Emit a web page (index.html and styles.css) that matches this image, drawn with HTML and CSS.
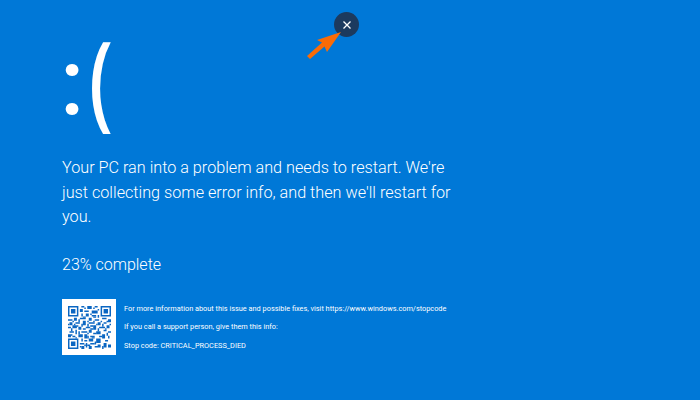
FILE: index.html
```html
<!DOCTYPE html>
<html lang="en">
<head>
<meta charset="utf-8">
<title>Blue screen</title>
<link rel="stylesheet" href="styles.css">
</head>
<body>
<main class="screen">
  <div class="sad"><span class="eyes">:</span><span class="mouth">(</span></div>
  <p class="message">Your PC ran into a problem and needs to restart. We're just collecting some error info, and then we'll restart for you.</p>
  <p class="progress">23% complete</p>
  <div class="details">
    <div class="qr">
      <svg width="43" height="43" viewBox="0 0 29 29">
        <path class="qr-dark" d="M0 0h7v7H0zM22 0h7v7h-7zM0 22h7v7H0z"/>
        <path fill="#fff" d="M1 1h5v5H1zM23 1h5v5h-5zM1 23h5v5H1z"/>
        <path class="qr-dark" d="M2 2h3v3H2zM24 2h3v3h-3zM2 24h3v3H2z"/>
        <path class="qr-dark" d="M9 0h2v1H9zM13 0h3v2h-3zM18 0h2v1h-2zM8 2h2v2H8zM11 3h3v1h-3zM16 3h4v2h-4zM9 5h1v2H9zM12 5h2v2h-2zM16 6h3v1h-3zM20 6h1v2h-1zM0 9h3v1H0zM4 8h2v2H4zM8 8h4v1H8zM14 8h2v2h-2zM18 9h3v1h-3zM23 8h3v1h-3zM27 9h2v2h-2zM1 11h2v2H1zM5 11h3v1H5zM10 10h2v3h-2zM14 11h4v1h-4zM20 11h2v2h-2zM24 11h2v1h-2zM0 14h2v1H0zM3 13h3v2H3zM7 14h2v2H7zM12 14h3v1h-3zM17 13h2v3h-2zM21 14h4v1h-4zM26 13h2v2h-2zM1 17h3v1H1zM5 16h1v3H5zM9 17h4v1H9zM14 16h2v2h-2zM19 17h3v2h-3zM24 16h2v1h-2zM27 17h2v1h-2zM0 19h2v2H0zM3 20h2v1H3zM7 19h3v2H7zM11 19h2v3h-2zM15 20h3v1h-3zM23 19h2v3h-2zM27 20h1v2h-1zM9 22h1v2H9zM14 22h3v2h-3zM19 22h3v3h-3zM25 23h2v1h-2zM8 25h3v1H8zM12 25h1v3h-1zM15 25h3v1h-3zM24 25h2v3h-2zM27 26h2v2h-2zM9 27h2v2H9zM14 27h2v2h-2zM18 27h4v1h-4z"/>
        <path class="qr-dark" d="M11 1h1v1h-1zM17 1h1v1h-1zM20 2h1v1h-1zM15 5h1v1h-1zM10 7h2v1h-2zM17 7h2v1h-2zM3 10h1v1H3zM7 9h1v2H7zM13 10h1v1h-1zM17 10h1v1h-1zM22 10h1v1h-1zM26 10h1v1h-1zM0 12h1v1H0zM4 12h1v1H4zM9 12h1v2H9zM13 12h1v2h-1zM19 12h1v1h-1zM23 12h1v2h-1zM28 12h1v1h-1zM6 13h1v1H6zM15 13h2v1h-2zM10 15h2v1h-2zM15 15h2v1h-2zM20 15h1v2h-1zM25 15h1v1h-1zM2 15h1v2H2zM7 17h1v2H7zM13 18h1v1h-1zM17 18h2v1h-2zM26 18h1v2h-1zM2 19h1v1H2zM5 21h1v1H5zM13 20h1v2h-1zM16 21h2v1h-2zM21 20h2v1h-2zM11 23h2v1h-2zM18 24h1v2h-1zM8 27h1v1H8zM11 26h1v1h-1zM13 26h2v1h-2zM20 26h2v1h-2zM23 27h1v2h-1z"/>
      </svg>
    </div>
    <div class="info">
      <p>For more information about this issue and possible fixes, visit https://www.windows.com/stopcode</p>
      <p>If you call a support person, give them this info:</p>
      <p>Stop code: CRITICAL_PROCESS_DIED</p>
    </div>
  </div>
</main>
<button class="close" type="button" aria-label="Close">
  <svg width="10" height="10" viewBox="0 0 10 10"><path d="M1.500 1.500l7 7M8.500 1.500l-7 7" stroke="#fff" stroke-width="1.300" fill="none"/></svg>
</button>
<svg class="arrow" width="36" height="34" viewBox="0 0 36 34"><path fill="#f96b07" d="M35 5L21 25 18.500 19.500 4 32 1 29 16 15.500 11 13z"/></svg>
</body>
</html>
```
FILE: styles.css
```css
* { box-sizing: border-box; }
html, body { margin: 0; height: 100%; }
body {
  position: relative;
  width: 700px;
  height: 400px;
  overflow: hidden;
  background: #0078d7;
  color: #fff;
  font-family: Roboto, "Open Sans", sans-serif;
  font-weight: 300;
}
.screen {
  padding: 19px 0 0 62px;
  display: flex;
  flex-direction: column;
}
.sad {
  display: flex;
  align-items: baseline;
  height: 137px;
  line-height: 116px;
}
.eyes {
  font-size: 92px;
  font-weight: 500;
  margin-left: -2px;
  transform: translateY(-3px);
}
.mouth {
  font-family: "Open Sans", sans-serif;
  font-size: 105px;
  font-weight: 600;
  margin-left: 5px;
  transform: scaleX(0.72);
  transform-origin: left center;
}
.message {
  margin: 0;
  width: 392px;
  font-size: 16.200px;
  line-height: 24.500px;
}
.progress {
  margin: 23.500px 0 0;
  font-size: 16px;
  line-height: 24px;
}
.details {
  margin-top: 22px;
  display: flex;
  align-items: center;
  gap: 8px;
}
.qr {
  width: 54px;
  height: 56px;
  background: #fff;
  display: flex;
  align-items: center;
  justify-content: center;
}
.qr-dark { fill: #0a66c2; }
.info {
  font-size: 7.350px;
  line-height: 10px;
  display: flex;
  flex-direction: column;
  gap: 8.500px;
  font-weight: 400;
  padding-top: 0;
}
.info p { margin: 0; white-space: nowrap; }
.close {
  position: absolute;
  left: 334px;
  top: 12px;
  width: 25px;
  height: 25px;
  padding: 0;
  border: 0;
  border-radius: 50%;
  background: #1c3a5e;
  display: flex;
  align-items: center;
  justify-content: center;
}
.arrow {
  position: absolute;
  left: 306px;
  top: 27px;
}
```
